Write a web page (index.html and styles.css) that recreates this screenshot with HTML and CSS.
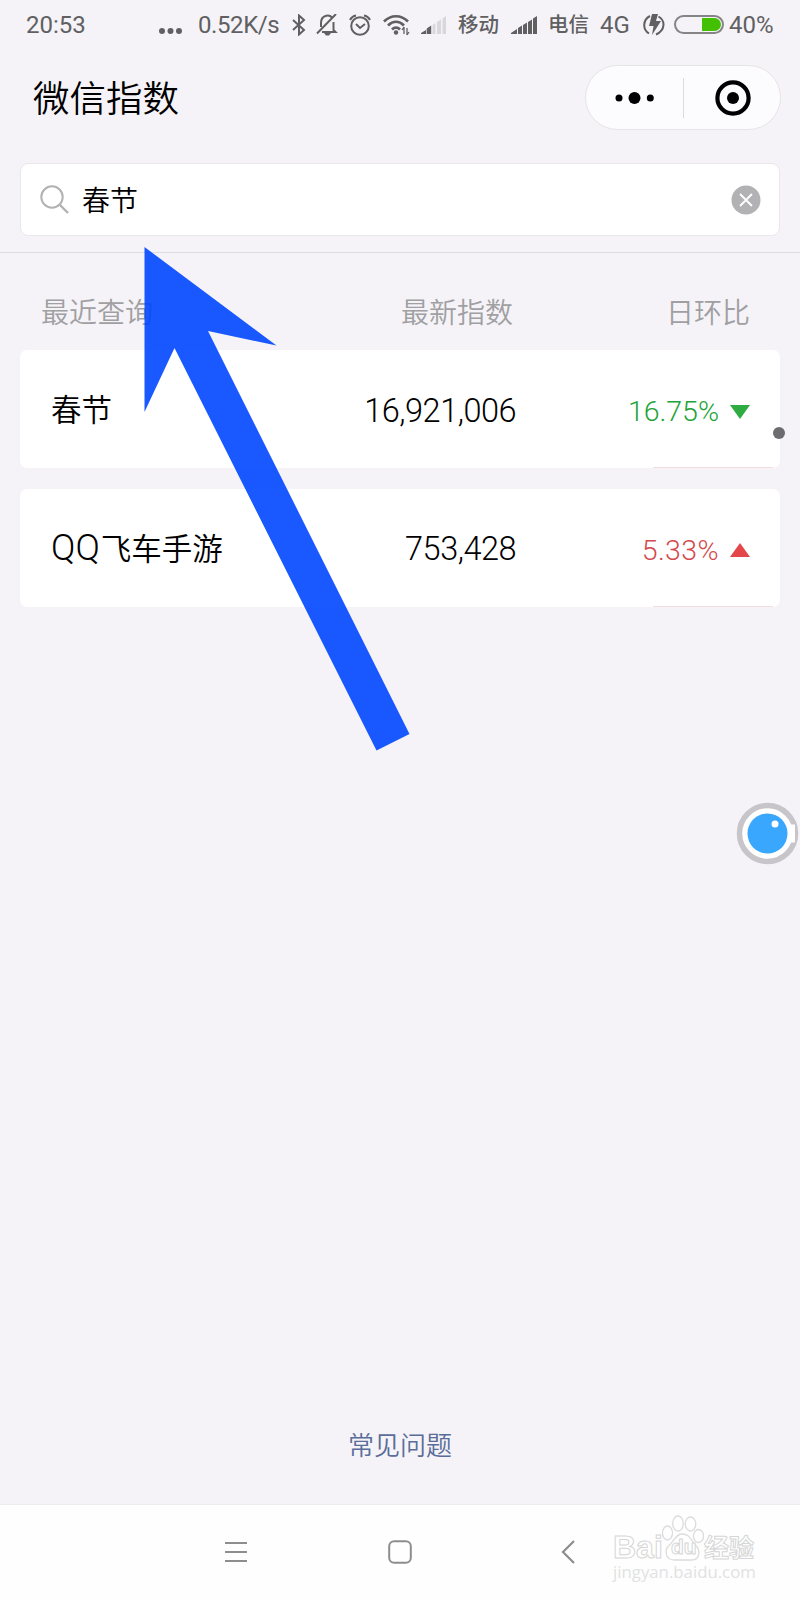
FILE: index.html
```html
<!DOCTYPE html>
<html lang="zh">
<head>
    <meta charset="UTF-8">
    <title>微信指数</title>
    <link rel="stylesheet" href="styles.css">
</head>
<body>
    <div class="status-bar">
        <span>20:53</span>
        <svg width="24" height="30" viewBox="0 0 24 30" fill="#606062"><circle cx="4" cy="21" r="3"/><circle cx="12.5" cy="21" r="3"/><circle cx="21" cy="21" r="3"/></svg>
        <span class="speed">0.52K/s</span>
        <!-- 蓝牙 -->
        <svg width="16" height="22" viewBox="0 0 16 22" fill="none" stroke="#606062" stroke-width="2"><path d="M2 6l11 10-5 4.500V1.500L13 6 2 16"/></svg>
        <!-- 静音 -->
        <svg width="22" height="22" viewBox="0 0 22 22" fill="none" stroke="#606062" stroke-width="2"><path d="M1 19.500L20 0M5 13V9c0-8 8-9 11-5.500M17.500 8v8l2 2H6"/><path d="M8 19h7l-2 2.500h-3z" fill="#606062" stroke="none"/></svg>
        <!-- 闹钟 -->
        <svg width="22" height="22" viewBox="0 0 22 22" fill="none" stroke="#606062" stroke-width="2"><circle cx="11" cy="12" r="8.800"/><path d="M7 10l4 4 5-4M1 6c1-2 3-4 6-4.500M21 6c-1-2-3-4-6-4.500"/></svg>
        <!-- WiFi -->
        <svg width="28" height="22" viewBox="0 0 28 22" fill="none" stroke="#606062" stroke-width="2.700"><path d="M2 7.500c7-7 17-7 24 0M6 11.500c5-5 11-5 16 0M10 15.500c2.500-2.500 5.500-2.500 8 0"/><circle cx="14" cy="18.500" r="2.200" fill="#606062" stroke="none"/><path d="M22 13v7M25 14v7M20 16l2-3M27 18l-2 3" stroke-width="1.300"/></svg>
        <svg width="27" height="20" viewBox="0 0 27 20" fill="#606062"><path d="M1 18l5-3v4H1zM6.700 13.500l4.500-3V19H6.700z"/><g fill="#d9d7db"><path d="M12.500 10l3-2v11h-3zM17 7l4-2.500V19h-4zM22.500 3.500L26 1v18h-3.500z"/></g></svg>
        <span class="carrier">移动</span>
        <svg width="27" height="20" viewBox="0 0 27 20" fill="#606062"><path d="M0 18l6-4v5H0zM7 13l4-2.500V19H7zM12 10l4-2.500V19h-4zM17 7l4-2.500V19h-4zM22 3.500L26 1v18h-4z"/></svg>
        <span class="carrier">电信</span>
        <span class="net">4G</span>
        <!-- 充电 -->
        <svg width="22" height="22" viewBox="0 0 22 22" fill="none" stroke="#606062" stroke-width="2"><path d="M7 2C-.500 6-.500 15.500 6 19.500M15.500 2.500C22.500 6.500 22.500 16 13 20.500"/><path d="M9 0h6l-2 7h5L9 21l1.500-9H6z" fill="#606062" stroke="none"/></svg>
        <span class="battery"><i></i></span>
        <span>40%</span>
    </div>

    <div class="header">
        <h1>微信指数</h1>
        <div class="capsule">
            <div class="capsule-btn"><svg width="40" height="14" viewBox="0 0 40 14"><circle cx="4" cy="7" r="3.500"/><circle cx="19.500" cy="7" r="6"/><circle cx="35.300" cy="7" r="3.500"/></svg></div>
            <div class="capsule-btn"><svg width="36" height="36" viewBox="0 0 36 36"><circle cx="18" cy="18" r="15.600" fill="none" stroke="#000" stroke-width="4.200"/><circle cx="18" cy="18" r="6"/></svg></div>
        </div>
    </div>

    <div class="search-wrap">
        <div class="search-box">
            <svg width="30" height="30" viewBox="0 0 30 30" fill="none" stroke="#b2b2b4" stroke-width="2"><circle cx="12" cy="12" r="10.700"/><path d="M19.500 19.500l8.500 8.500" stroke-width="2.400"/></svg>
            <span class="keyword">春节</span>
            <svg width="30" height="30" viewBox="0 0 30 30"><circle cx="15" cy="15" r="14.500" fill="#b2b2b4"/><path d="M9 9l12 12M21 9L9 21" stroke="#fff" stroke-width="1.800"/></svg>
        </div>
    </div>

    <div class="main">
        <div class="row table-head">
            <span>最近查询</span>
            <span class="index">最新指数</span>
            <span class="change">日环比</span>
        </div>
        <div class="row card">
            <span class="name">春节</span>
            <span class="index">16,921,006</span>
            <span class="change down">16.75% <svg width="20" height="14" viewBox="0 0 20 14"><path d="M0 0h20L10 14z" fill="#2fac41"/></svg></span>
        </div>
        <div class="row card">
            <span class="name"><b>QQ</b>飞车手游</span>
            <span class="index">753,428</span>
            <span class="change up">5.33% <svg width="20" height="14" viewBox="0 0 20 14"><path d="M0 14h20L10 0z" fill="#e4474a"/></svg></span>
        </div>
        <a class="faq">常见问题</a>
    </div>

    <div class="nav-bar">
        <svg width="24" height="24" viewBox="0 0 24 24" fill="none" stroke="#8d8d8d" stroke-width="2.200"><path d="M1 3h22M1 12h22M1 21h22"/></svg>
        <svg width="24" height="24" viewBox="0 0 24 24" fill="none" stroke="#8d8d8d" stroke-width="2"><rect x="1.200" y="1.200" width="21.600" height="21.600" rx="5"/></svg>
        <svg width="14" height="24" viewBox="0 0 14 24" fill="none" stroke="#8d8d8d" stroke-width="2.200"><path d="M13 1L2 12l11 11"/></svg>
        <div class="watermark">
            <div class="logo">
                <span class="bai">Bai</span>
                <span class="paw">
                    <svg width="42" height="46" viewBox="0 0 42 46" fill="#fff" stroke="#dcdcdc" stroke-width="1.300"><ellipse cx="5.500" cy="18" rx="5" ry="7"/><ellipse cx="16" cy="8.500" rx="5.300" ry="7.500"/><ellipse cx="28.500" cy="9" rx="5.300" ry="7"/><ellipse cx="36.500" cy="21" rx="5" ry="6.500"/><path d="M20.500 19c-7 0-8 7-13 11s-5 15 5 15h17c9 0 9-10 4-15s-6-11-13-11z"/></svg>
                    <em>du</em>
                </span>
                <span class="jy">经验</span>
            </div>
            <div class="url">jingyan.baidu.com</div>
        </div>
    </div>

    <svg class="arrow" width="266" height="504" viewBox="0 0 266 504"><path d="M.500 0L132.500 98.500 64 84 265.500 487 232.500 503.500 30.500 101 .500 165z" fill="#0148ff"/></svg>
    <div class="touch-dot"></div>
    <svg class="float-ball" width="64" height="64" viewBox="0 0 64 64"><circle cx="31.500" cy="31.500" r="28" fill="#fff" stroke="#c7c5c9" stroke-width="5.500"/><rect x="54" y="22.500" width="5" height="18" fill="#fff"/><circle cx="31.500" cy="31.500" r="20" fill="#39a7fd"/><circle cx="39" cy="22" r="3.500" fill="#fff"/></svg>
</body>
</html>
```
FILE: styles.css
```css
:root {
    --bg-color: #f5f3f7;
    --status-color: #606062;
    --gray: #a09fa2;
}

* {
    box-sizing: border-box;
}

body {
    position: relative;
    width: 800px;
    height: 1600px;
    margin: 0;
    overflow: hidden;
    display: flex;
    flex-direction: column;
    background: var(--bg-color);
    color: #000;
    font-family: Roboto, "Noto Sans CJK SC", sans-serif;
    font-weight: 350;
}

svg {
    display: block;
    flex: none;
}

.status-bar {
    height: 49px;
    padding-left: 26px;
    display: grid;
    grid-template-columns: 132px 40px 93px 25px 33px 33px 38px 38px 53px 37px 51px 44px 30px 56px 71px;
    align-items: center;
    color: var(--status-color);
    font-size: 24px;
    font-weight: 400;
    line-height: 48px;
    white-space: nowrap;
}

.status-bar .speed {
    letter-spacing: -0.4px;
}

.status-bar .net {
    padding-left: 1px;
}

.status-bar .carrier {
    padding-top: 1px;
    font-size: 20.5px;
    font-weight: 500;
}

.status-bar .battery {
    width: 50px;
    height: 19px;
    margin-left: 1px;
    padding: 1px;
    border: 2px solid #858585;
    border-radius: 10px;
    display: flex;
    justify-content: flex-end;
}

.battery i {
    width: 19px;
    background: #43c000;
    border-radius: 0 7px 7px 0;
}

.header {
    height: 97px;
    padding: 0 19px 0 33px;
    display: flex;
    align-items: center;
    justify-content: space-between;
}

.header h1 {
    margin: 0;
    padding-top: 5px;
    font-size: 36.5px;
    font-weight: 350;
    line-height: 60px;
}

.capsule {
    width: 196px;
    height: 65px;
    display: flex;
    align-items: center;
    background: #fcfbfd;
    border: 1px solid #e6e4e8;
    border-radius: 33px;
}

.capsule-btn {
    width: 97px;
    height: 40px;
    flex: none;
    display: flex;
    align-items: center;
    justify-content: center;
}

.capsule-btn + .capsule-btn {
    padding-left: 2px;
    border-left: 1px solid #dcdade;
}

.search-wrap {
    height: 107px;
    padding: 17px 20px 0;
    border-bottom: 1.5px solid #dedce0;
}

.search-box {
    height: 73px;
    padding: 0 18px 0 19px;
    display: flex;
    align-items: center;
    background: #fff;
    border: 1px solid #e9e7eb;
    border-radius: 8px;
}

.keyword {
    flex: 1;
    margin-left: 12px;
    padding-bottom: 2px;
    font-size: 28px;
}

.main {
    flex: 1;
    padding: 0 20px;
    display: flex;
    flex-direction: column;
}

.row {
    display: grid;
    grid-template-columns: 250px 215px 1fr;
    align-items: center;
    padding: 0 30px 0 31px;
}

.table-head {
    height: 97px;
    padding: 18px 30px 0 21px;
    color: var(--gray);
    font-size: 28px;
}

.index,
.change {
    text-align: right;
}

.table-head .index {
    padding-right: 3px;
    margin-right: -10px;
}

.card {
    height: 118px;
    margin-bottom: 20.5px;
    /* 右下角的淡红色细线 */
    background: linear-gradient(#f3dcdc, #f3dcdc) 633px 100% / 120px 1px no-repeat #fff;
    border-radius: 7px;
}

.card .name {
    padding-bottom: 2px;
    font-size: 30.5px;
    white-space: nowrap;
}

.name b {
    margin-right: 1px;
    font-weight: 300;
    font-size: 36px;
    line-height: 30px;
}

.card .index {
    padding-top: 3px;
    font-size: 32.5px;
    font-weight: 300;
    letter-spacing: -0.5px;
}

.card .change {
    padding-top: 5px;
    display: flex;
    align-items: center;
    justify-content: flex-end;
    gap: 11px;
    font-size: 28.5px;
    font-weight: 300;
}

.down {
    color: #22a336;
}

.up {
    color: #d34a4d;
}

.card .up {
    letter-spacing: 0.4px;
}

.faq {
    margin: auto auto 38px;
    color: #5a6d9a;
    font-size: 26px;
    line-height: 40px;
}

.nav-bar {
    position: relative;
    height: 96px;
    padding: 0 0 2px 224px;
    display: flex;
    align-items: center;
    background: #fefefe;
    border-top: 1px solid #eeecef;
}

.nav-bar > svg + svg {
    margin-left: 140px;
}

.nav-bar > svg + svg + svg {
    margin-left: 149px;
}

.watermark {
    position: absolute;
    left: 613px;
    top: 8px;
    color: #fff;
    font-family: "Liberation Sans", "Noto Sans CJK SC", sans-serif;
    font-weight: 700;
}

.logo {
    height: 48px;
    display: flex;
    align-items: flex-end;
    -webkit-text-stroke: 1px #d6d6d6;
}

.bai {
    width: 49px;
    font-size: 32px;
    line-height: 27px;
}

.paw {
    position: relative;
}

.paw em {
    position: absolute;
    left: 9px;
    bottom: 2px;
    font-size: 21px;
    font-style: normal;
    line-height: 24px;
}

.jy {
    font-size: 25px;
    line-height: 25px;
}

.url {
    margin-top: 1px;
    color: #e2e2e2;
    font-family: "Open Sans", sans-serif;
    font-size: 16.8px;
    font-weight: 400;
    line-height: 20px;
}

/* 浮层 */
.arrow {
    position: absolute;
    left: 144px;
    top: 247px;
    opacity: 0.9;
}

.touch-dot {
    position: absolute;
    left: 773px;
    top: 427px;
    width: 12px;
    height: 12px;
    border-radius: 50%;
    background: #6b6b70;
}

.float-ball {
    position: absolute;
    left: 736px;
    top: 802px;
}
```
